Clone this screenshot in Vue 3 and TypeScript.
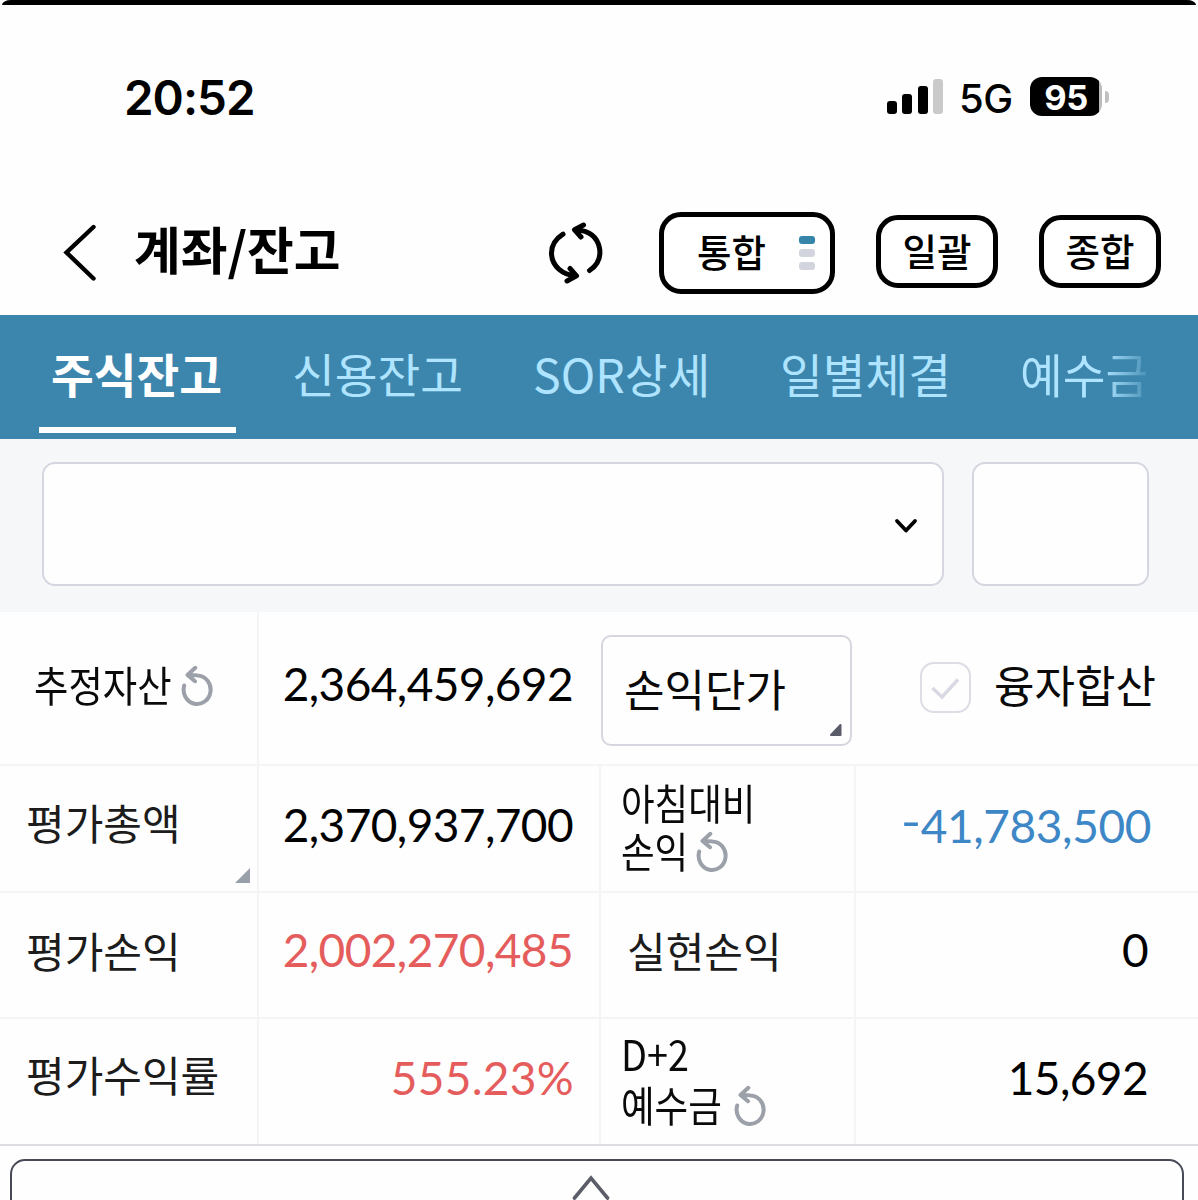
<script setup lang="ts">
import { ref } from 'vue'

const tabs = ref<string[]>(['주식잔고', '신용잔고', 'SOR상세', '일별체결', '예수금'])
const active = ref(0)
const signal = [13, 20, 28, 35]
const reloadPath = 'M3.200 20.500A13.500 14.300 0 1 0 16.300 10.400C13 9.800 10 9.900 6.800 10M14.300 2.800 6.500 10 14 16.200'
</script>

<template>
  <div class="screen">
    <div class="bezel"></div>

    <div class="status">
      <span class="time">20:52</span>
      <div class="signal">
        <i v-for="(h, n) in signal" :key="n" :class="{ off: n === 3 }" :style="{ height: h + 'px' }"></i>
      </div>
      <span class="net">5G</span>
      <div class="battery"><span>95</span></div>
      <i class="nub"></i>
    </div>

    <header class="head">
      <svg class="back" width="40" height="64" viewBox="0 0 40 64" fill="none" stroke="#000" stroke-width="4.400" stroke-linecap="round">
        <path d="M33.500 7 6.500 32.500 33.500 58.500" />
      </svg>
      <h1>계좌/잔고</h1>
      <svg class="sync" width="60" height="68" viewBox="0 0 60 68" fill="none" stroke="#000" stroke-width="5" stroke-linecap="round" stroke-linejoin="round">
        <path d="M17 15.200C8 21 5 29 5.600 36C6.500 47 16 55.500 29.500 57M24 49.500 30.500 56.800 21 62" />
        <path d="M43.500 51.500C52 46 55 38 53.500 29C51.500 19 44 12 30.500 10.800M37.500 6 28.500 10.800 35 18" />
      </svg>
      <button class="pill wide">
        <span class="cap">통합</span>
        <span class="bars"><i class="on"></i><i></i><i></i></span>
      </button>
      <button class="pill"><span class="cap">일괄</span></button>
      <button class="pill last"><span class="cap">종합</span></button>
    </header>

    <nav class="tabs">
      <a v-for="(t, n) in tabs" :key="t" :class="['tab', 'tab' + n, { active: n === active }]">{{ t }}</a>
    </nav>

    <section class="account">
      <div class="select">
        <svg width="26" height="18" viewBox="0 0 26 18" fill="none" stroke="#000" stroke-width="3.800" stroke-linecap="round" stroke-linejoin="round">
          <path d="M4 4 13 13.500 22 4" />
        </svg>
      </div>
      <div class="pin"></div>
    </section>

    <section class="grid">
      <div class="row r1">
        <div class="cell c1 first">
          <span class="label narrow w4 wide-label">추정자산</span>
          <svg class="reload" viewBox="0 0 34 42"><path :d="reloadPath" /></svg>
        </div>
        <div class="cell c2"><span class="num">2,364,459,692</span></div>
        <div class="options">
          <div class="dropdown">
            손익단가
            <svg width="13" height="14" viewBox="0 0 13 14"><path d="M11.500 2V12H2Z" fill="#595b68" stroke="#595b68" stroke-width="2" stroke-linejoin="round" /></svg>
          </div>
          <div class="check">
            <svg width="31" height="24" viewBox="0 0 31 24" fill="none" stroke="#d8d9e3" stroke-width="3.400"><path d="M2.500 11 12 20 28 2.500" /></svg>
          </div>
          <span class="loan">융자합산</span>
        </div>
      </div>

      <div class="row r2">
        <div class="cell c1"><span class="label">평가총액</span>
          <svg class="corner" width="15" height="15" viewBox="0 0 15 15"><path d="M15 0V15H0Z" fill="#9aa0a9" /></svg>
        </div>
        <div class="cell c2"><span class="num">2,370,937,700</span></div>
        <div class="cell c3 two">
          <div class="line"><span class="label narrow w4">아침대비</span></div>
          <div class="line"><span class="label narrow w2">손익</span>
            <svg class="reload" viewBox="0 0 34 42"><path :d="reloadPath" /></svg>
          </div>
        </div>
        <div class="cell c4"><span class="num down"><span class="minus">-</span>41,783,500</span></div>
      </div>

      <div class="row r3">
        <div class="cell c1"><span class="label">평가손익</span></div>
        <div class="cell c2"><span class="num up">2,002,270,485</span></div>
        <div class="cell c3 one"><span class="label">실현손익</span></div>
        <div class="cell c4"><span class="num">0</span></div>
      </div>

      <div class="row r4">
        <div class="cell c1"><span class="label">평가수익률</span></div>
        <div class="cell c2"><span class="num up rate">555.23%</span></div>
        <div class="cell c3 two">
          <div class="line"><span class="label narrow wd">D+2</span></div>
          <div class="line"><span class="label narrow w3">예수금</span>
            <svg class="reload" viewBox="0 0 34 42"><path :d="reloadPath" /></svg>
          </div>
        </div>
        <div class="cell c4"><span class="num">15,692</span></div>
      </div>
    </section>

    <footer class="sheet">
      <svg width="42" height="30" viewBox="0 0 42 30" fill="none" stroke="#5b5d69" stroke-width="3.600" stroke-linecap="round"><path d="M4.500 25 21 5 37.500 25" /></svg>
    </footer>
  </div>
</template>

<style>
body { margin: 0; background: #fff; }
</style>

<style scoped>
* { box-sizing: border-box; }
.screen {
  width: 1198px;
  height: 1200px;
  overflow: hidden;
  background: #fefefe;
  color: #0a0a0a;
  font-family: "Noto Sans CJK KR", sans-serif;
  display: flex;
  flex-direction: column;
}
.screen > * { flex: none; }
.bezel { height: 5px; margin: 0 2px; background: #000; border-radius: 9px 9px 0 0 / 5px 5px 0 0; }

.status { height: 185px; display: flex; align-items: flex-start; font-family: Inter, sans-serif; color: #000; }
.time { width: 761px; margin-left: 124px; margin-top: 64px; font-size: 47.500px; line-height: 58px; font-weight: 600; letter-spacing: -1px; }
.signal { width: 56px; height: 35px; margin: 74px 0 0 2px; display: flex; align-items: flex-end; justify-content: space-between; }
.signal i { width: 10px; border-radius: 3px; background: #000; }
.signal i.off { background: #cacaca; }
.net { width: 69px; margin: 70px 0 0 16px; font-size: 40px; line-height: 48px; font-weight: 500; letter-spacing: -.6px; }
.battery { width: 72px; height: 39px; margin: 72px 0 0 2px; border-radius: 12px; background: linear-gradient(90deg, #000 69px, #bbb 69px); color: #fff; display: flex; justify-content: center; font-size: 34.500px; line-height: 41px; font-weight: 700; letter-spacing: -.5px; }
.nub { width: 4px; height: 12px; margin: 86px 0 0 3px; border-radius: 0 6px 6px 0; background: #c0c0c0; }

.head { height: 125px; display: flex; align-items: flex-start; }
.back { margin: 30px 0 0 60px; }
h1 { width: 410px; margin: 23px 0 0 34px; font-size: 50.800px; line-height: 70px; font-weight: 700; color: #000; white-space: nowrap; }
.sync { margin: 29px 0 0 2px; }
.pill { width: 122px; height: 73px; margin: 25px 0 0 41px; padding: 0; border: 5px solid #000; border-radius: 22px; background: #fff; color: #000; font: 500 37.500px/60px "Noto Sans CJK KR", sans-serif; display: flex; justify-content: center; align-items: center; }
.pill.wide { width: 176px; height: 82px; margin: 22px 0 0 53px; justify-content: flex-start; padding-left: 33px; }
.cap { padding-bottom: 4px; }
.bars { width: 16px; margin-left: 33px; display: flex; flex-direction: column; gap: 5px; }
.bars i { height: 8px; border-radius: 3px; background: #d2d4de; }
.bars i.on { background: #3585ab; }

.tabs { height: 124px; background: #3c86ad; display: flex; align-items: flex-start; }
.tab { height: 118px; font-size: 46.500px; line-height: 115px; color: #aee4ff; white-space: nowrap; font-weight: 400; }
.tab.active { color: #fff; font-weight: 700; border-bottom: 6px solid #fff; }
.tab0 { width: 197px; margin-left: 39px; padding-left: 12px; }
.tab1 { width: 241px; margin-left: 56px; }
.tab2 { width: 247px; }
.tab3 { width: 240px; }
.tab4 { width: 127px; background: linear-gradient(90deg, #aee4ff 82px, #4b93b9 127px); background-clip: text; color: transparent; }

.account { height: 173px; padding: 23px 0 0 42px; background: #f6f7f9; display: flex; gap: 28px; }
.select, .pin { height: 124px; border: 2px solid #d5d6df; border-radius: 13px; background: #fefefe; }
.select { width: 902px; display: flex; justify-content: flex-end; align-items: center; padding: 3px 23px 0 0; }
.pin { width: 177px; }

.grid { border-bottom: 2px solid #dcdde1; }
.row { display: flex; border-bottom: 2px solid #f4f5f6; }
.r1 { height: 154px; }
.r2 { height: 127px; }
.r3 { height: 126px; }
.r4 { height: 125px; border-bottom: 0; }
.cell { position: relative; display: flex; align-items: center; }
.c1 { width: 259px; padding-left: 26px; border-right: 2px solid #f4f5f6; padding-bottom: 14px; }
.r3 .c1 { padding-bottom: 11px; }
.r4 .c1 { padding-bottom: 15px; }
.c1.first { padding-left: 34px; padding-bottom: 9px; }
.c1.first .reload { margin-top: 5px; }
.c2 { width: 342px; padding: 0 26px 8px 0; justify-content: flex-end; border-right: 2px solid #f4f5f6; }
.r3 .c2, .r3 .c4 { padding-bottom: 10px; }
.r1 .c2 { border-right-color: transparent; }
.c3 { width: 255px; border-right: 2px solid #f4f5f6; }
.c3.one { padding: 0 0 11px 26px; }
.c3.two { flex-direction: column; align-items: flex-start; padding: 12px 0 0 20px; }
.r4 .c3.two { padding-top: 10px; }
.c3 .reload { margin-top: 4px; }
.r4 .line + .line { margin-top: 3px; }
.c4 { width: 342px; padding: 0 50px 8px 0; justify-content: flex-end; }
.r2 .c4 { padding: 0 47px 5px 0; }
.label { display: block; font-size: 42px; line-height: 48px; color: #1c1c1c; white-space: nowrap; }
.narrow { color: #0a0a0a; transform: scaleX(.87); transform-origin: 0 50%; }
.wide-label { transform: scaleX(.89); }
.w4 { width: 147px; }
.w2 { width: 75px; }
.w3 { width: 113px; }
.wd { transform: scaleX(.9); }
.line { height: 48px; display: flex; align-items: center; }
.reload { width: 34px; height: 42px; fill: none; stroke: #9ba0a9; stroke-width: 4; stroke-linecap: round; stroke-linejoin: round; }
.corner { position: absolute; right: 7px; bottom: 8px; }
.num { font-family: Lato, sans-serif; font-size: 46px; line-height: 56px; letter-spacing: -.6px; color: #000; }
.num.rate { letter-spacing: .3px; margin-right: -1px; }
.num.up { color: #e55c5c; }
.num.down { color: #3d87c7; letter-spacing: -.4px; }
.minus { display: inline-block; position: relative; top: -5px; transform: scaleX(1.2); transform-origin: 100% 50%; }

.options { flex: 1; display: flex; align-items: flex-start; }
.dropdown { position: relative; width: 251px; height: 111px; margin-top: 23px; padding-left: 21px; border: 2px solid #d5d6df; border-radius: 10px; font-size: 44px; line-height: 102px; }
.dropdown svg { position: absolute; right: 8px; bottom: 7px; }
.check { width: 51px; height: 51px; margin: 50px 0 0 68px; border: 2px solid #dcdde5; border-radius: 14px; display: flex; align-items: center; justify-content: center; padding-top: 3px; }
.loan { margin: 42px 0 0 23px; font-size: 44px; line-height: 60px; white-space: nowrap; }

.sheet { width: 1174px; height: 80px; margin: 13px 0 0 10px; padding: 12px 12px 0 0; border: 2px solid #474957; border-radius: 15px; display: flex; justify-content: center; align-items: flex-start; }
</style>
